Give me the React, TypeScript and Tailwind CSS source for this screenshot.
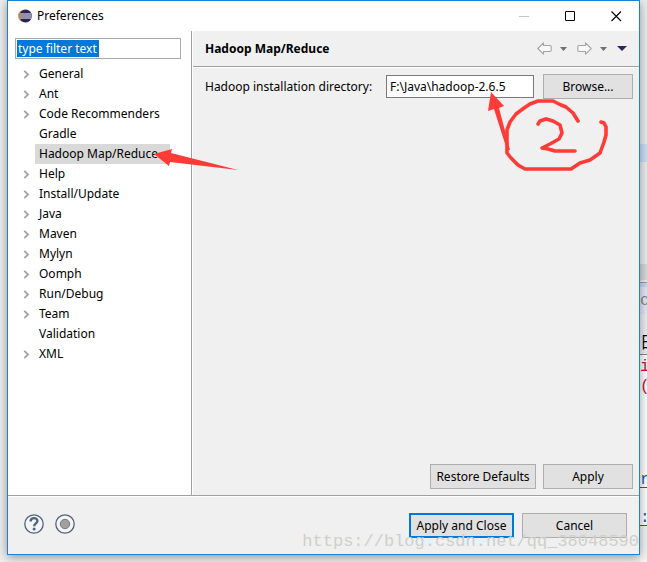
import type { ButtonHTMLAttributes } from "react";
import clsx from "clsx";

type TreeItem = {
  label: string;
  expandable: boolean;
  selected?: boolean;
};

const TREE_ITEMS: TreeItem[] = [
  { label: "General", expandable: true },
  { label: "Ant", expandable: true },
  { label: "Code Recommenders", expandable: true },
  { label: "Gradle", expandable: false },
  { label: "Hadoop Map/Reduce", expandable: false, selected: true },
  { label: "Help", expandable: true },
  { label: "Install/Update", expandable: true },
  { label: "Java", expandable: true },
  { label: "Maven", expandable: true },
  { label: "Mylyn", expandable: true },
  { label: "Oomph", expandable: true },
  { label: "Run/Debug", expandable: true },
  { label: "Team", expandable: true },
  { label: "Validation", expandable: false },
  { label: "XML", expandable: true },
];

const EclipseLogo = () => (
  <svg width="14" height="14" viewBox="0 0 14 14" aria-hidden="true">
    <circle cx="6.2" cy="7" r="6.2" fill="#f7941e" />
    <circle cx="7.6" cy="7" r="6.4" fill="#2c2255" />
    <path d="M1.5 5h12M1.2 7h12.6M1.5 9h12" stroke="#fff" strokeWidth="1" />
  </svg>
);

const HistoryArrow = ({ forward = false }: { forward?: boolean }) => (
  <svg
    width="15"
    height="13"
    viewBox="0 0 15 13"
    className={clsx(forward && "rotate-180")}
    aria-hidden="true"
  >
    <path
      d="M.8 6.5L6.5 .9V3.5H13Q14.2 3.5 14.2 4.7V8.3Q14.2 9.5 13 9.5H6.5V12.1Z"
      fill="#f8f8f8"
      stroke="#a4a4a4"
      strokeWidth="1.1"
      strokeLinejoin="round"
    />
  </svg>
);

const DropTriangle = () => (
  <svg width="7" height="4" viewBox="0 0 7 4" aria-hidden="true">
    <path d="M0 0h7L3.5 4z" fill="#6f6f72" />
  </svg>
);

const PushButton = ({
  className,
  ...props
}: ButtonHTMLAttributes<HTMLButtonElement>) => (
  <button
    type="button"
    className={clsx(
      "h-[25px] bg-[#e1e1e1] text-center whitespace-nowrap",
      className
    )}
    {...props}
  />
);

const TitleBar = () => (
  <header className="flex h-[30px] items-center bg-white pl-[10px]">
    <EclipseLogo />
    <h1 className="ml-[5px] flex-1">Preferences</h1>
    <div className="flex h-full items-center">
      <button type="button" aria-label="Minimize" className="flex w-[46px] justify-center">
        <svg width="11" height="11" viewBox="0 0 11 11">
          <path d="M0 5.5h10" stroke="#c4c4c4" />
        </svg>
      </button>
      <button type="button" aria-label="Maximize" className="flex w-[46px] justify-center">
        <svg width="11" height="11" viewBox="0 0 11 11">
          <path d="M.5 .5h9v9h-9z" fill="none" stroke="#000" />
        </svg>
      </button>
      <button type="button" aria-label="Close" className="flex w-[46px] justify-center">
        <svg width="11" height="11" viewBox="0 0 11 11">
          <path d="M.5 .5l9.5 9.5M10 .5l-9.5 9.5" stroke="#000" strokeWidth="1.1" />
        </svg>
      </button>
    </div>
  </header>
);

const PreferenceTree = () => (
  <ul className="mt-[5px]">
    {TREE_ITEMS.map((item) => (
      <li key={item.label} className="flex h-5 items-center pl-2">
        <span className="w-3">
          {item.expandable && (
            <svg width="7" height="9" viewBox="0 0 7 9" aria-hidden="true">
              <path d="M1.3 .8L5 4.5L1.3 8.2" fill="none" stroke="#a6a6a6" strokeWidth="1.9" />
            </svg>
          )}
        </span>
        <button
          type="button"
          className={clsx(
            "h-5 pr-3 pl-1 text-left whitespace-nowrap",
            item.selected && "bg-[#d9d9d9]"
          )}
        >
          {item.label}
        </button>
      </li>
    ))}
  </ul>
);

const PageToolbar = () => (
  <div className="flex items-center">
    <button type="button" aria-label="Back">
      <HistoryArrow />
    </button>
    <button type="button" aria-label="Back history" className="ml-2">
      <DropTriangle />
    </button>
    <button type="button" aria-label="Forward" className="ml-[10px]">
      <HistoryArrow forward />
    </button>
    <button type="button" aria-label="Forward history" className="ml-2">
      <DropTriangle />
    </button>
    <button type="button" aria-label="View menu" className="ml-[10px]">
      <svg width="10" height="5" viewBox="0 0 10 5">
        <path d="M0 0h10L5 5z" fill="#33205c" />
      </svg>
    </button>
  </div>
);

const HadoopPage = () => (
  <main className="flex min-w-0 flex-1 flex-col">
    <div className="flex h-[35px] items-center justify-between px-3">
      <h2 className="font-bold">Hadoop Map/Reduce</h2>
      <PageToolbar />
    </div>
    <div className="h-[2px] border-t border-[#a0a0a0] bg-white" />
    <div className="flex items-center pt-[6px] pr-[6px] pl-3">
      <label htmlFor="hadoop-dir" className="w-[173px] whitespace-nowrap">
        Hadoop installation directory:
      </label>
      <input
        id="hadoop-dir"
        type="text"
        defaultValue="F:\Java\hadoop-2.6.5"
        className="ml-2 h-[23px] min-w-0 flex-1 border border-[#7a7a7a] bg-white px-[3px]"
      />
      <PushButton className="ml-[9px] w-[90px] border border-[#adadad]">Browse...</PushButton>
    </div>
    <div className="mt-auto flex justify-end gap-[7px] pr-[6px] pb-[6px]">
      <PushButton className="w-[106px] border border-[#adadad]">Restore Defaults</PushButton>
      <PushButton className="w-[90px] border border-[#adadad]">Apply</PushButton>
    </div>
  </main>
);

const Footer = () => (
  <footer className="relative flex h-[57px] items-start pt-4 pr-3 pl-4">
    <button type="button" aria-label="Help">
      <svg width="20" height="21" viewBox="0 0 20 21">
        <circle cx="10" cy="11" r="9.2" fill="#f4f4f4" stroke="#4f6285" strokeWidth="1.3" />
        <path
          d="M6.6 8.4C6.6 4 13.6 4.2 13.4 8c-.1 2.4-3.2 2.4-3.2 5.2"
          fill="none"
          stroke="#4f6285"
          strokeWidth="2.4"
        />
        <circle cx="10.1" cy="16" r="1.5" fill="#4f6285" />
      </svg>
    </button>
    <button type="button" aria-label="Record" className="ml-[11px]">
      <svg width="20" height="21" viewBox="0 0 20 21">
        <circle cx="10" cy="11" r="9.2" fill="#f4f4f4" stroke="#4f6285" strokeWidth="1.3" />
        <circle cx="10" cy="11" r="4.7" fill="#a0a0a0" stroke="#777" />
      </svg>
    </button>
    <div className="ml-auto flex gap-2">
      <PushButton className="w-[105px] border-2 border-[#0078d7]">Apply and Close</PushButton>
      <PushButton className="w-[105px] border border-[#adadad]">Cancel</PushButton>
    </div>
    <p className="pointer-events-none absolute right-0 bottom-0 font-['Liberation_Mono',monospace] text-[17px] leading-6 text-[#cfcfcb]">
      https://blog.csdn.net/qq_38048590
    </p>
  </footer>
);

const Annotations = () => (
  <svg
    width="632"
    height="240"
    viewBox="8 1 632 240"
    className="pointer-events-none absolute top-0 left-0"
    aria-hidden="true"
  >
    <path d="M154 154L172 149L171 153L238 170L170 162L169 166Z" fill="#ff3b37" />
    <path d="M491 92L504 106L499 108L510 150L507 150L494 109L488 111Z" fill="#ff3b37" />
    <g fill="none" stroke="#ff3b37" strokeWidth="3.6" strokeLinecap="round" strokeLinejoin="round">
      <path d="M578 121L573 113L566 107L561 105L553 101H538L530 104L524 108L516 114L510 122L507 130V153L511 158L518 165L525 169H571L580 163L590 160L600 153L604 142L606 135V127L604 123L601 122" />
      <path d="M538 124L540 121L546 119L553 121L560 125L562 133L559 139L550 144L542 148L548 149L555 151H575" />
    </g>
  </svg>
);

// Slice of the editor that shows beside the dialog.
const EditorEdge = () => (
  <div
    aria-hidden="true"
    className="absolute inset-y-0 right-0 w-[7px] overflow-hidden font-['Liberation_Mono','Noto_Sans_CJK_SC',monospace] text-[16px] leading-5"
  >
    <div className="h-36 bg-[#eeeeee]" />
    <div className="h-[18px] bg-[#cfe0f5]" />
    <div className="h-[102px] bg-[#eeeeee]" />
    <div className="h-4 bg-[#d9d9d9]" />
    <div className="h-[2px] bg-[#eeeeee]" />
    <div className="h-[5px] border-t border-[#a0a0a0] bg-[#ccd8f0]" />
    <div className="h-[27px] bg-[#e6e9f7] pt-1 text-[#8a8a8a]">o</div>
    <div className="h-[41px] border-b border-[#888888] bg-[#eeeef5] pt-5 text-black">日</div>
    <div className="h-[115px] bg-white pt-[2px] text-[#c8102e]">
      <div>i</div>
      <div>(</div>
    </div>
    <div className="h-[18px] border-b border-[#1b5fb4] bg-white text-[#1b5fb4]">r</div>
    <div className="h-[38px] border-b border-[#1b5fb4] bg-white pt-5 text-[#1b5fb4]">:</div>
    <div className="h-9 bg-[#f4f4f4]" />
  </div>
);

const App = () => (
  <div className="relative flex min-h-screen flex-col bg-[#efefef] px-[7px] pb-[7px] font-['Noto_Sans','Segoe_UI',sans-serif] text-[12px] leading-4 text-black">
    <EditorEdge />
    <div className="relative flex flex-1 flex-col border border-[#1883d7] bg-[#f0f0f0] shadow-[0_2px_10px_rgba(0,0,0,0.4)]">
      <TitleBar />
      <div className="flex flex-1">
        <nav aria-label="Preference pages" className="w-[183px] bg-white pt-[7px] pl-[7px]">
          <div className="mr-[10px] border border-[#a5a8b0] p-px">
            <input
              type="text"
              aria-label="Filter"
              defaultValue="type filter text"
              className="block h-[17px] w-[82px] bg-[#0078d7] px-px text-white"
            />
          </div>
          <PreferenceTree />
        </nav>
        <div className="w-[2px] border-l border-[#a0a0a0] bg-white" />
        <HadoopPage />
      </div>
      <div className="h-[2px] border-t border-[#a0a0a0] bg-white" />
      <Footer />
      <Annotations />
    </div>
  </div>
);

export default App;
